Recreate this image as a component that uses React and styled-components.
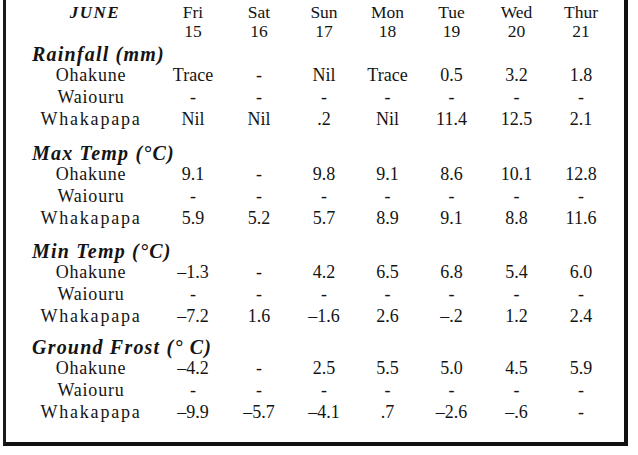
import React from "react";
import styled, { createGlobalStyle } from "styled-components";

const GlobalStyle = createGlobalStyle`
  body {
    margin: 0;
    background: #fff;
  }
`;

// column widths tuned so each day sits under its heading in the scan
const COLUMNS = "154px 66px 66px 64px 63px 65px 65px 64px";

const days = [
  { name: "Fri", date: 15 },
  { name: "Sat", date: 16 },
  { name: "Sun", date: 17 },
  { name: "Mon", date: 18 },
  { name: "Tue", date: 19 },
  { name: "Wed", date: 20 },
  { name: "Thur", date: 21 }
];

const blank = ["-", "-", "-", "-", "-", "-", "-"];

const sections = [
  {
    title: "Rainfall (mm)",
    space: 3,
    rows: [
      ["Ohakune", ["Trace", "-", "Nil", "Trace", "0.5", "3.2", "1.8"]],
      ["Waiouru", blank],
      ["Whakapapa", ["Nil", "Nil", ".2", "Nil", "11.4", "12.5", "2.1"]]
    ]
  },
  {
    title: "Max Temp (°C)",
    space: 13,
    rows: [
      ["Ohakune", ["9.1", "-", "9.8", "9.1", "8.6", "10.1", "12.8"]],
      ["Waiouru", blank],
      ["Whakapapa", ["5.9", "5.2", "5.7", "8.9", "9.1", "8.8", "11.6"]]
    ]
  },
  {
    title: "Min Temp (°C)",
    space: 12,
    rows: [
      ["Ohakune", ["–1.3", "-", "4.2", "6.5", "6.8", "5.4", "6.0"]],
      ["Waiouru", blank],
      ["Whakapapa", ["–7.2", "1.6", "–1.6", "2.6", "–.2", "1.2", "2.4"]]
    ]
  },
  {
    title: "Ground Frost (° C)",
    space: 10,
    rows: [
      ["Ohakune", ["–4.2", "-", "2.5", "5.5", "5.0", "4.5", "5.9"]],
      ["Waiouru", blank],
      ["Whakapapa", ["–9.9", "–5.7", "–4.1", ".7", "–2.6", "–.6", "-"]]
    ]
  }
];

function App() {
  return (
    <>
      <GlobalStyle />
      <Sheet>
        <HeaderRow>
          <MonthLabel>JUNE</MonthLabel>
          {days.map((d) => (
            <Cell key={d.name}>{d.name}</Cell>
          ))}
        </HeaderRow>
        <HeaderRow>
          <span></span>
          {days.map((d) => (
            <Cell key={d.date}>{d.date}</Cell>
          ))}
        </HeaderRow>
        {sections.map((section) => (
          <Section key={section.title} $space={section.space}>
            <Heading>{section.title}</Heading>
            {section.rows.map(([station, values]) => (
              <DataRow key={station}>
                <Station $wide={station === "Whakapapa"}>{station}</Station>
                {values.map((v, i) => (
                  <Cell key={i}>{v}</Cell>
                ))}
              </DataRow>
            ))}
          </Section>
        ))}
      </Sheet>
    </>
  );
}

export default App;

const Sheet = styled.div`
  box-sizing: border-box;
  width: 625px;
  margin-left: 3px;
  padding: 3px 0 19px;
  border-left: 3px solid #1a1a1a;
  border-right: 4px solid #111;
  border-bottom: 4px solid #111;
  font-family: "Liberation Serif", "Times New Roman", serif;
  color: #141414;
`;

const HeaderRow = styled.div`
  display: grid;
  grid-template-columns: ${COLUMNS};
  font-size: 17.5px;
  line-height: 19px;
`;

const MonthLabel = styled.div`
  padding-left: 24px;
  text-align: center;
  font-size: 17px;
  font-weight: bold;
  font-style: italic;
  letter-spacing: 1.5px;
`;

const Section = styled.div`
  margin-top: ${(p) => p.$space}px;
`;

const Heading = styled.div`
  padding-left: 26px;
  font-size: 20px;
  line-height: 20px;
  font-weight: bold;
  font-style: italic;
  letter-spacing: 1.2px;
`;

const DataRow = styled.div`
  display: grid;
  grid-template-columns: ${COLUMNS};
  font-size: 18px;
  line-height: 22px;
`;

const Station = styled.div`
  padding-left: 16px;
  text-align: center;
  letter-spacing: ${(p) => (p.$wide ? "1.8px" : "0.8px")};
  white-space: nowrap;
`;

const Cell = styled.div`
  text-align: center;
  white-space: nowrap;
`;
